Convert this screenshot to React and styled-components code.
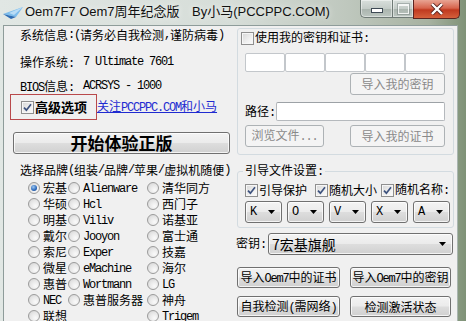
import React from "react";
import styled, { createGlobalStyle } from "styled-components";

const GlobalStyle = createGlobalStyle`
  html, body { margin: 0; padding: 0; }
  body {
    width: 466px;
    height: 321px;
    overflow: hidden;
    font-family: "Noto Sans CJK SC", "Liberation Sans", sans-serif;
    font-size: 12px;
    color: #000;
  }
`;

// splits ascii runs into the narrow mono face, like SimSun's half-width latin
const T = ({ children }) =>
  String(children)
    .split(/([\x20-\x7e]+)/)
    .map((p, i) =>
      !p ? null : /^[\x20-\x7e]+$/.test(p) ? (
        <Lat key={i}>{p}</Lat>
      ) : (
        <React.Fragment key={i}>{p}</React.Fragment>
      )
    );

const brands = [
  [["宏基", true], ["Alienware"], ["清华同方"]],
  [["华硕"], ["Hcl"], ["西门子"]],
  [["明基"], ["Viliv"], ["诺基亚"]],
  [["戴尔"], ["Jooyon"], ["富士通"]],
  [["索尼"], ["Exper"], ["技嘉"]],
  [["微星"], ["eMachine"], ["海尔"]],
  [["惠普"], ["Wortmann"], ["LG"]],
  [["NEC"], ["惠普服务器"], ["神舟"]],
  [["联想"], null, ["Trigem"]],
];

const Check = ({ checked }) => (
  <CheckBox>
    {checked && (
      <svg width="9" height="9" viewBox="0 0 9 9">
        <path d="M1 4.6 L3.4 7.2 L8 1.2" stroke="#3d527e" strokeWidth="1.7" fill="none" />
      </svg>
    )}
  </CheckBox>
);

const Arrow = () => (
  <svg width="7" height="4" viewBox="0 0 7 4">
    <path d="M0 0 H7 L3.5 4 Z" fill="#000" />
  </svg>
);

export default function App() {
  return (
    <>
      <GlobalStyle />
      <Window>
        <TitleBar>
          <svg width="20" height="12" viewBox="0 0 20 12" style={{ margin: "7px 2px 0 3px" }}>
            <polygon points="0,7 20,0 13,10" fill="#7cbcec" />
            <polygon points="0,7 13,10 8,12" fill="#2d6cb4" />
            <polygon points="6,6 20,0 11,8" fill="#b9dcf6" />
          </svg>
          <TitleText $w={167}>Oem7F7 Oem7周年纪念版</TitleText>
          <TitleText>By小马(PCCPPC.COM)</TitleText>
          <Caption>
            <CapBtn $w={32}>
              <MinBar />
            </CapBtn>
            <CapBtn $w={21}>
              <MaxBox />
            </CapBtn>
            <CloseBtn>
              <svg width="14" height="12" viewBox="0 0 14 12">
                <path d="M2 1 L12 11 M12 1 L2 11" stroke="#5a2420" strokeWidth="4" />
                <path d="M2 1 L12 11 M12 1 L2 11" stroke="#fff" strokeWidth="2.4" />
              </svg>
            </CloseBtn>
          </Caption>
        </TitleBar>

        <Client>
          <LeftCol>
            <Line $mt={1}>
              <T>系统信息:(请务必自我检测,谨防病毒)</T>
            </Line>
            <Line $mt={11}>
              <LabelCell>
                <T>操作系统:</T>
              </LabelCell>
              <Lat>7 Ultimate 7601</Lat>
            </Line>
            <Line $mt={8}>
              <LabelCell>
                <T>BIOS信息:</T>
              </LabelCell>
              <Lat>ACRSYS - 1000</Lat>
            </Line>
            <AdvRow>
              <RedBox>
                <Check checked />
                <BoldLabel>高级选项</BoldLabel>
              </RedBox>
              <Link>
                <T>关注PCCPPC.COM和小马</T>
              </Link>
            </AdvRow>
            <BigButton>开始体验正版</BigButton>
            <Line $mt={8}>
              <T>选择品牌(组装/品牌/苹果/虚拟机随便)</T>
            </Line>
            <BrandGrid>
              {brands.flat().map((b, i) =>
                b ? (
                  <RadioItem key={i}>
                    <Radio $on={!!b[1]} />
                    <span>
                      <T>{b[0]}</T>
                    </span>
                  </RadioItem>
                ) : (
                  <span key={i} />
                )
              )}
            </BrandGrid>
          </LeftCol>

          <RightCol>
            <Group>
              <CheckItem $ml={-4} $mt={1}>
                <Check />
                <span>
                  <T>使用我的密钥和证书:</T>
                </span>
              </CheckItem>
              <KeyRow>
                {[0, 1, 2, 3, 4].map((k) => (
                  <KeyBox key={k} />
                ))}
              </KeyRow>
              <Button $w={95} $h={22} $ml={105} $mt={1} disabled>
                导入我的密钥
              </Button>
              <PathRow>
                <PathLabel>
                  <T>路径:</T>
                </PathLabel>
                <TextInput />
              </PathRow>
              <ButtonRow $mt={4} $gap={26}>
                <Button $w={79} $h={22} disabled>
                  <T>浏览文件...</T>
                </Button>
                <Button $w={95} $h={22} disabled>
                  导入我的证书
                </Button>
              </ButtonRow>
            </Group>

            <BootGroup>
              <BootLegend>
                <T>引导文件设置:</T>
              </BootLegend>
              <CheckRow>
                <CheckItem>
                  <Check checked />
                  <span>引导保护</span>
                </CheckItem>
                <CheckItem $ml={8}>
                  <Check checked />
                  <span>随机大小</span>
                </CheckItem>
                <CheckItem $ml={4}>
                  <Check checked />
                  <span>
                    <T>随机名称:</T>
                  </span>
                </CheckItem>
              </CheckRow>
              <ComboRow>
                {["K", "O", "V", "X", "A"].map((c) => (
                  <Combo key={c} $w={37}>
                    <Lat>{c}</Lat>
                    <Arrow />
                  </Combo>
                ))}
              </ComboRow>
            </BootGroup>

            <KeyLine>
              <PathLabel $w={32}>
                <T>密钥:</T>
              </PathLabel>
              <Combo $w={185} $big>
                <span>7宏基旗舰</span>
                <Arrow />
              </Combo>
            </KeyLine>
            <ButtonRow $mt={12} $gap={10}>
              <Button $w={103} $h={21}>
                <T>导入Oem7中的证书</T>
              </Button>
              <Button $w={101} $h={21}>
                <T>导入Oem7中的密钥</T>
              </Button>
            </ButtonRow>
            <ButtonRow $mt={8} $gap={10}>
              <Button $w={103} $h={21}>
                <T>自我检测(需网络)</T>
              </Button>
              <Button $w={101} $h={21}>
                检测激活状态
              </Button>
            </ButtonRow>
          </RightCol>
        </Client>
      </Window>
    </>
  );
}

// Styled Components
const Window = styled.div`
  width: 466px;
  height: 321px;
  overflow: hidden;
  display: flex;
  flex-direction: column;
  background: linear-gradient(90deg, #e1e7e4 0%, #d6ddd8 50%, #bec7bd 75%, #a7b2a1 92%, #7f9277 100%);
`;

const TitleBar = styled.div`
  height: 25px;
  flex-shrink: 0;
  display: flex;
  align-items: flex-start;
`;

const TitleText = styled.div`
  width: ${({ $w }) => ($w ? `${$w}px` : "auto")};
  padding-top: 3px;
  line-height: 18px;
  font-family: "Liberation Sans", "Noto Sans CJK SC", sans-serif;
  font-size: 13px;
  color: #111;
  white-space: nowrap;
  text-shadow: 0 0 6px rgba(255, 255, 255, 0.9);
`;

const Caption = styled.div`
  margin-left: auto;
  margin-right: 6px;
  display: flex;
`;

const CapBtn = styled.div`
  width: ${({ $w }) => $w}px;
  height: 18px;
  box-sizing: border-box;
  border: 1px solid #6f7a76;
  border-top: none;
  border-right: none;
  background: linear-gradient(#d9dfdc 0%, #c4ccc8 50%, #aab4ae 52%, #bcc6c0 100%);
  box-shadow: inset 0 0 0 1px rgba(255, 255, 255, 0.45);
  display: flex;
  align-items: center;
  justify-content: center;
  &:first-child {
    border-bottom-left-radius: 5px;
  }
`;

const MinBar = styled.div`
  width: 10px;
  height: 3px;
  margin-top: 4px;
  background: #fff;
  border: 1px solid #3e4a55;
`;

const MaxBox = styled.div`
  width: 9px;
  height: 7px;
  border: 1px solid rgba(255, 255, 255, 0.8);
  border-top-width: 2px;
  box-shadow: 0 0 0 1px rgba(90, 100, 100, 0.35);
`;

const CloseBtn = styled.div`
  width: 47px;
  height: 19px;
  box-sizing: border-box;
  border: 1px solid #5b2420;
  border-top: none;
  border-bottom-right-radius: 5px;
  background: linear-gradient(#e8a493 0%, #d7644d 45%, #c0391f 55%, #d5603c 100%);
  display: flex;
  align-items: center;
  justify-content: center;
`;

const Client = styled.div`
  flex: 1;
  margin-left: 3px;
  width: 455px;
  box-sizing: border-box;
  border-left: 1px solid #8e9c9a;
  border-top: 1px solid #8e9c9a;
  border-right: 1px solid #a9b5b0;
  background: #f0f0f0;
  display: flex;
  align-items: flex-start;
`;

const LeftCol = styled.div`
  width: 231px;
  flex-shrink: 0;
  display: flex;
  flex-direction: column;
`;

const Line = styled.div`
  margin-top: ${({ $mt }) => $mt}px;
  padding-left: 16px;
  height: 16px;
  line-height: 16px;
  display: flex;
  white-space: nowrap;
`;

const LabelCell = styled.span`
  width: 63px;
  flex-shrink: 0;
`;

const Lat = styled.span`
  font-family: "Liberation Mono", monospace;
  font-size: 12px;
  letter-spacing: -1.2px;
  white-space: pre;
`;

const AdvRow = styled.div`
  display: flex;
  align-items: center;
  height: 26px;
`;

const RedBox = styled.div`
  margin-left: 6px;
  width: 87px;
  height: 26px;
  box-sizing: border-box;
  border: 1px solid #b9494b;
  padding-left: 10px;
  display: flex;
  align-items: center;
  gap: 1px;
`;

const BoldLabel = styled.span`
  font-size: 13px;
  font-weight: 700;
  line-height: 16px;
`;

const Link = styled.span`
  color: #1f2bd0;
  text-decoration: underline;
  line-height: 16px;
  white-space: nowrap;
`;

const Button = styled.button`
  width: ${({ $w }) => $w}px;
  height: ${({ $h }) => $h}px;
  margin: ${({ $mt }) => $mt || 0}px 0 0 ${({ $ml }) => $ml || 0}px;
  padding: 0;
  flex-shrink: 0;
  box-sizing: border-box;
  border: 1px solid #707070;
  border-radius: 3px;
  background: linear-gradient(#f3f3f3 0%, #ebebeb 48%, #dddddd 52%, #d0d0d0 100%);
  box-shadow: inset 0 0 0 1px rgba(255, 255, 255, 0.75);
  font-family: "Noto Sans CJK SC", sans-serif;
  font-size: 12px;
  line-height: 16px;
  color: #000;
  white-space: nowrap;
  &:disabled {
    border-color: #adb2b5;
    background: #f4f4f4;
    box-shadow: none;
    color: #8a8a8a;
  }
`;

const BigButton = styled(Button)`
  width: 217px;
  height: 22px;
  margin: 12px 0 0 9px;
  font-size: 17px;
  font-weight: 700;
  line-height: 20px;
`;

const BrandGrid = styled.div`
  margin-top: 2px;
  padding-left: 24px;
  display: grid;
  grid-template-columns: 40px 79px 1fr;
  grid-auto-rows: 16px;
`;

const RadioItem = styled.div`
  display: flex;
  align-items: center;
  gap: 3px;
  line-height: 16px;
  white-space: nowrap;
`;

const Radio = styled.span`
  width: 12px;
  height: 12px;
  flex-shrink: 0;
  box-sizing: border-box;
  border-radius: 50%;
  border: 1px solid #9b9b9b;
  background: radial-gradient(circle at 65% 70%, #fafafa 0%, #e6e6e6 55%, #cfcfcf 100%);
  display: flex;
  align-items: center;
  justify-content: center;
  &::after {
    content: "";
    display: ${({ $on }) => ($on ? "block" : "none")};
    width: 6px;
    height: 6px;
    border-radius: 50%;
    background: radial-gradient(circle at 40% 35%, #9cc8f2 0%, #2a66b8 60%, #18407e 100%);
  }
`;

const CheckBox = styled.span`
  width: 13px;
  height: 13px;
  flex-shrink: 0;
  box-sizing: border-box;
  border: 1px solid #8f8f8f;
  background: linear-gradient(135deg, #d6d6d6 0%, #f0f0f0 60%, #fcfcfc 100%);
  box-shadow: inset 0 0 0 1px #f6f6f6;
  display: flex;
  align-items: center;
  justify-content: center;
`;

const RightCol = styled.div`
  flex: 1;
  padding-left: 2px;
  display: flex;
  flex-direction: column;
`;

const Group = styled.div`
  margin-top: 2px;
  width: 217px;
  height: 127px;
  box-sizing: border-box;
  border: 1px solid #d3dbe0;
  border-radius: 3px;
  padding-left: 7px;
  display: flex;
  flex-direction: column;
  align-items: flex-start;
`;

const CheckItem = styled.div`
  margin: ${({ $mt }) => $mt || 0}px 0 0 ${({ $ml }) => $ml || 0}px;
  height: 16px;
  display: flex;
  align-items: center;
  gap: 1px;
  line-height: 16px;
  white-space: nowrap;
`;

const KeyRow = styled.div`
  margin-top: 7px;
  display: flex;
`;

const KeyBox = styled.div`
  width: 40px;
  height: 19px;
  box-sizing: border-box;
  border: 1px solid #c3c7cb;
  border-radius: 2px;
  background: #fff;
`;

const PathRow = styled.div`
  margin-top: 7px;
  height: 19px;
  display: flex;
  align-items: center;
`;

const PathLabel = styled.span`
  width: ${({ $w }) => $w || 31}px;
  flex-shrink: 0;
  line-height: 16px;
  white-space: nowrap;
`;

const TextInput = styled.div`
  width: 169px;
  height: 19px;
  box-sizing: border-box;
  border: 1px solid #b5b9bd;
  border-top-color: #9da2a6;
  border-radius: 2px;
  background: #fff;
`;

const ButtonRow = styled.div`
  margin-top: ${({ $mt }) => $mt}px;
  display: flex;
  gap: ${({ $gap }) => $gap}px;
`;

const BootGroup = styled.fieldset`
  margin: 7px 0 0;
  width: 217px;
  height: 66px;
  box-sizing: border-box;
  border: 1px solid #d3dbe0;
  border-radius: 3px;
  padding: 0 0 0 7px;
  min-width: 0;
`;

const BootLegend = styled.legend`
  padding: 0 2px;
  margin-left: -2px;
  line-height: 16px;
  white-space: nowrap;
`;

const CheckRow = styled.div`
  margin-top: 2px;
  display: flex;
`;

const ComboRow = styled.div`
  margin-top: 3px;
  display: flex;
  gap: 5px;
`;

const Combo = styled.div`
  width: ${({ $w }) => $w}px;
  height: 22px;
  flex-shrink: 0;
  box-sizing: border-box;
  border: 1px solid #707070;
  border-radius: 3px;
  background: linear-gradient(#f3f3f3 0%, #ebebeb 48%, #dddddd 52%, #d0d0d0 100%);
  box-shadow: inset 0 0 0 1px rgba(255, 255, 255, 0.75);
  padding: 0 6px 0 ${({ $big }) => ($big ? 3 : 4)}px;
  display: flex;
  align-items: center;
  justify-content: space-between;
  font-size: ${({ $big }) => ($big ? 14 : 12)}px;
  line-height: 16px;
`;

const KeyLine = styled.div`
  margin: 5px 0 0 -1px;
  height: 22px;
  display: flex;
  align-items: center;
`;
